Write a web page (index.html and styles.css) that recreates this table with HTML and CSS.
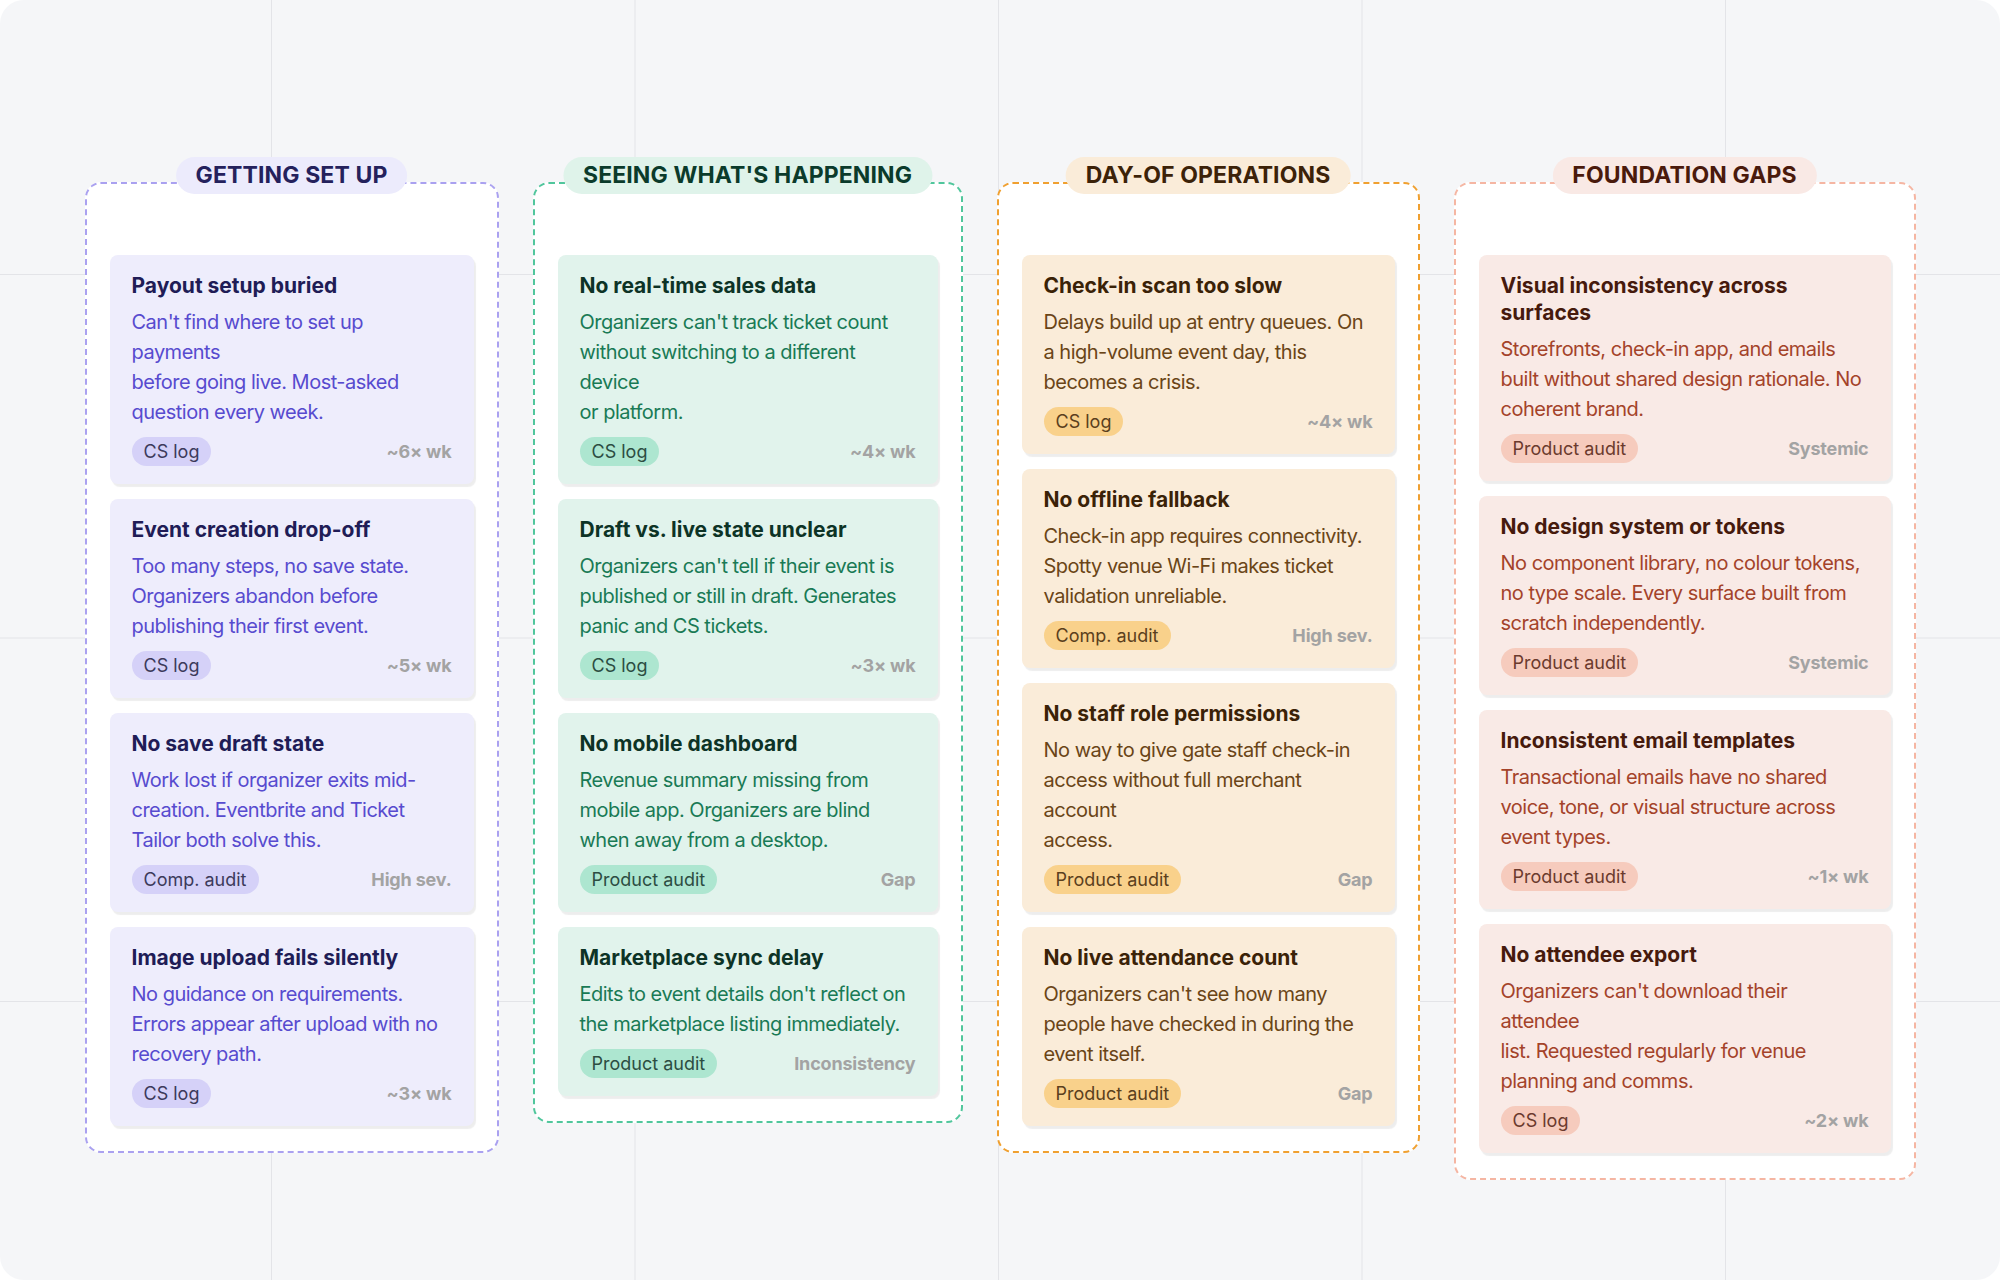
FILE: index.html
```html
<!DOCTYPE html>
<html lang="en">
<head>
<meta charset="utf-8">
<title>Organizer pain points</title>
<link rel="stylesheet" href="styles.css">
</head>
<body>
<main class="board">
  <section class="lane lane-purple">
    <h2 class="lane-title">GETTING SET UP</h2>
    <article class="card">
      <h3 class="card-title">Payout setup buried</h3>
      <p class="card-body">Can't find where to set up payments<br>before going live. Most-asked question every week.</p>
      <div class="card-foot"><span class="tag">CS log</span><span class="meta">~6× wk</span></div>
    </article>
    <article class="card">
      <h3 class="card-title">Event creation drop-off</h3>
      <p class="card-body">Too many steps, no save state. Organizers abandon before publishing their first event.</p>
      <div class="card-foot"><span class="tag">CS log</span><span class="meta">~5× wk</span></div>
    </article>
    <article class="card">
      <h3 class="card-title">No save draft state</h3>
      <p class="card-body">Work lost if organizer exits mid-creation. Eventbrite and Ticket Tailor both solve this.</p>
      <div class="card-foot"><span class="tag">Comp. audit</span><span class="meta">High sev.</span></div>
    </article>
    <article class="card">
      <h3 class="card-title">Image upload fails silently</h3>
      <p class="card-body">No guidance on requirements. Errors appear after upload with no recovery path.</p>
      <div class="card-foot"><span class="tag">CS log</span><span class="meta">~3× wk</span></div>
    </article>
  </section>

  <section class="lane lane-green">
    <h2 class="lane-title">SEEING WHAT'S HAPPENING</h2>
    <article class="card">
      <h3 class="card-title">No real-time sales data</h3>
      <p class="card-body">Organizers can't track ticket count without switching to a different device<br>or platform.</p>
      <div class="card-foot"><span class="tag">CS log</span><span class="meta">~4× wk</span></div>
    </article>
    <article class="card">
      <h3 class="card-title">Draft vs. live state unclear</h3>
      <p class="card-body">Organizers can't tell if their event is published or still in draft. Generates panic and CS tickets.</p>
      <div class="card-foot"><span class="tag">CS log</span><span class="meta">~3× wk</span></div>
    </article>
    <article class="card">
      <h3 class="card-title">No mobile dashboard</h3>
      <p class="card-body">Revenue summary missing from mobile app. Organizers are blind when away from a desktop.</p>
      <div class="card-foot"><span class="tag">Product audit</span><span class="meta">Gap</span></div>
    </article>
    <article class="card">
      <h3 class="card-title">Marketplace sync delay</h3>
      <p class="card-body">Edits to event details don't reflect on the marketplace listing immediately.</p>
      <div class="card-foot"><span class="tag">Product audit</span><span class="meta">Inconsistency</span></div>
    </article>
  </section>

  <section class="lane lane-orange">
    <h2 class="lane-title">DAY-OF OPERATIONS</h2>
    <article class="card">
      <h3 class="card-title">Check-in scan too slow</h3>
      <p class="card-body">Delays build up at entry queues. On a high-volume event day, this becomes a crisis.</p>
      <div class="card-foot"><span class="tag">CS log</span><span class="meta">~4× wk</span></div>
    </article>
    <article class="card">
      <h3 class="card-title">No offline fallback</h3>
      <p class="card-body">Check-in app requires connectivity. Spotty venue Wi-Fi makes ticket validation unreliable.</p>
      <div class="card-foot"><span class="tag">Comp. audit</span><span class="meta">High sev.</span></div>
    </article>
    <article class="card">
      <h3 class="card-title">No staff role permissions</h3>
      <p class="card-body">No way to give gate staff check-in access without full merchant account<br>access.</p>
      <div class="card-foot"><span class="tag">Product audit</span><span class="meta">Gap</span></div>
    </article>
    <article class="card">
      <h3 class="card-title">No live attendance count</h3>
      <p class="card-body">Organizers can't see how many people have checked in during the event itself.</p>
      <div class="card-foot"><span class="tag">Product audit</span><span class="meta">Gap</span></div>
    </article>
  </section>

  <section class="lane lane-salmon">
    <h2 class="lane-title">FOUNDATION GAPS</h2>
    <article class="card">
      <h3 class="card-title">Visual inconsistency across surfaces</h3>
      <p class="card-body">Storefronts, check-in app, and emails built without shared design rationale. No coherent brand.</p>
      <div class="card-foot"><span class="tag">Product audit</span><span class="meta">Systemic</span></div>
    </article>
    <article class="card">
      <h3 class="card-title">No design system or tokens</h3>
      <p class="card-body">No component library, no colour tokens, no type scale. Every surface built from scratch independently.</p>
      <div class="card-foot"><span class="tag">Product audit</span><span class="meta">Systemic</span></div>
    </article>
    <article class="card">
      <h3 class="card-title">Inconsistent email templates</h3>
      <p class="card-body">Transactional emails have no shared voice, tone, or visual structure across event types.</p>
      <div class="card-foot"><span class="tag">Product audit</span><span class="meta">~1× wk</span></div>
    </article>
    <article class="card">
      <h3 class="card-title">No attendee export</h3>
      <p class="card-body">Organizers can't download their attendee<br>list. Requested regularly for venue planning and comms.</p>
      <div class="card-foot"><span class="tag">CS log</span><span class="meta">~2× wk</span></div>
    </article>
  </section>
</main>
</body>
</html>
```

FILE: styles.css
```css
* { box-sizing: border-box; }

html, body {
  margin: 0;
  padding: 0;
  background: #ffffff;
}

body {
  font-family: "Inter", "Liberation Sans", sans-serif;
  width: 2000px;
  height: 1280px;
  overflow: hidden;
}

.board {
  width: 2000px;
  height: 1280px;
  border-radius: 24px;
  background-color: #f5f6f8;
  background-image:
    linear-gradient(to right, #e3e4e8 1px, transparent 1px),
    linear-gradient(to bottom, #e3e4e8 1px, transparent 1px);
  background-size: 363.5px 363.5px, 363.5px 363.5px;
  background-position: 271px 0, 0 274px;
  padding-top: 182px;
  display: grid;
  grid-template-columns: 414px 430px 423px 462px;
  column-gap: 34px;
  justify-content: center;
  align-items: start;
}

.lane {
  position: relative;
  background: #ffffff;
  border: 2px dashed;
  border-radius: 16px;
  padding: 71px 23px 25px;
  display: flex;
  flex-direction: column;
  gap: 15px;
}

.lane-title {
  position: absolute;
  top: -27px;
  left: 50%;
  transform: translateX(-50%);
  margin: 0;
  height: 37px;
  line-height: 37px;
  padding: 0 20px;
  border-radius: 19px;
  font-size: 23px;
  font-weight: 700;
  letter-spacing: 0.005em;
  white-space: nowrap;
}

.card {
  border-radius: 8px;
  padding: 17px 22px 18px;
  box-shadow: 2px 3px 1px rgba(0, 0, 0, 0.07);
}

.card-title {
  margin: 0;
  font-size: 21px;
  line-height: 27px;
  font-weight: 700;
  letter-spacing: 0;
}

.card-body {
  margin: 8px 0 0;
  font-size: 20px;
  line-height: 30px;
  font-weight: 400;
  letter-spacing: -0.025em;
}

.card-foot {
  margin-top: 10px;
  display: flex;
  justify-content: space-between;
  align-items: center;
}

.tag {
  height: 29px;
  line-height: 29px;
  padding: 0 12px;
  border-radius: 15px;
  font-size: 18px;
  letter-spacing: 0;
}

.meta {
  font-size: 18px;
  font-weight: 700;
  color: #a3a3a3;
  letter-spacing: -0.01em;
}

/* purple */
.lane-purple { border-color: #aaa1f0; }
.lane-purple .lane-title { background: #ecebfc; color: #24215c; }
.lane-purple .card { background: #eeedfc; }
.lane-purple .card-title { color: #201c56; }
.lane-purple .card-body { color: #574bcf; }
.lane-purple .tag { background: #d5d1f8; color: #3c3a5b; }

/* green */
.lane-green { border-color: #50c69c; }
.lane-green .lane-title { background: #dff3ea; color: #0b3b2b; }
.lane-green .card { background: #e1f3ec; }
.lane-green .card-title { color: #0d3326; }
.lane-green .card-body { color: #197a55; }
.lane-green .tag { background: #ade6d0; color: #2c4d42; }

/* orange */
.lane-orange { border-color: #f0a030; }
.lane-orange .lane-title { background: #faecd9; color: #3c2208; }
.lane-orange .card { background: #faecd9; }
.lane-orange .card-title { color: #3a2207; }
.lane-orange .card-body { color: #6a4517; }
.lane-orange .tag { background: #f9d18b; color: #5b3f1d; }

/* salmon */
.lane-salmon { border-color: #f5b6a3; }
.lane-salmon .lane-title { background: #f9e9e5; color: #4a1a0c; }
.lane-salmon .card { background: #f9eae6; }
.lane-salmon .card-title { color: #461a0d; }
.lane-salmon .card-body { color: #a4432a; }
.lane-salmon .tag { background: #f6cbbd; color: #6b3a2d; }
```
